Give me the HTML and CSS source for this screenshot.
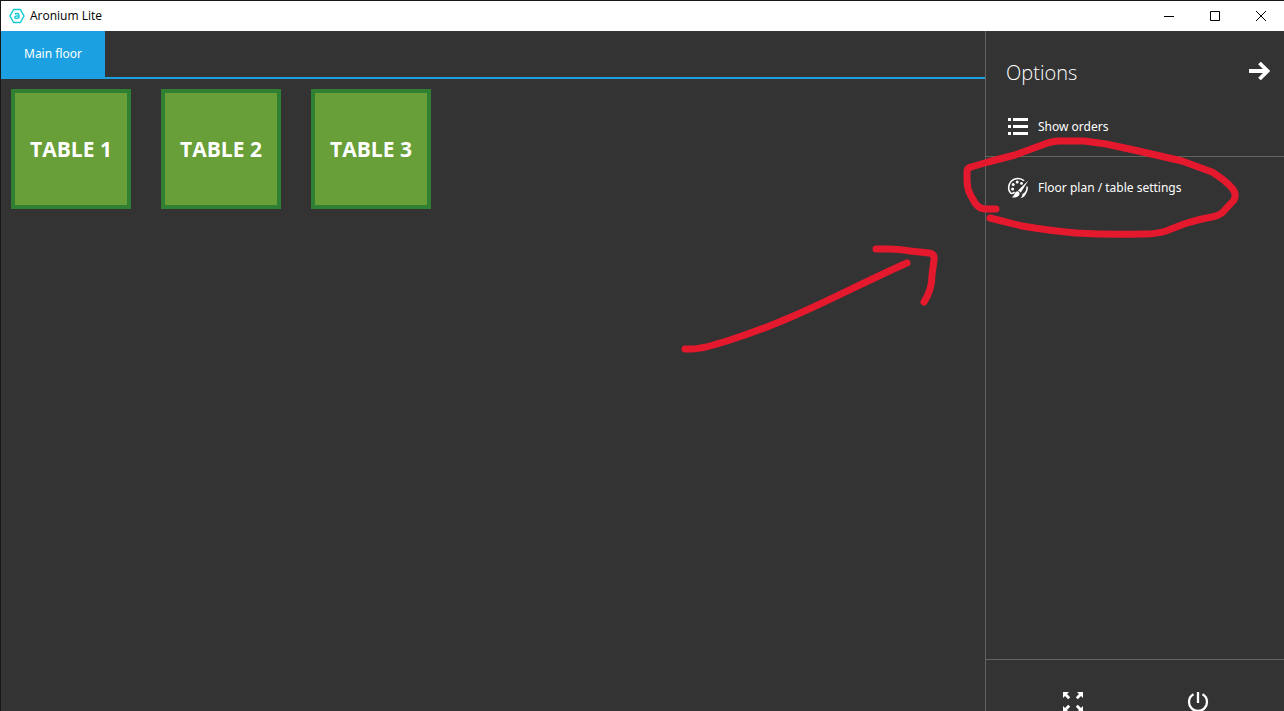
FILE: index.html
```html
<!DOCTYPE html>
<html lang="en">
<head>
<meta charset="utf-8">
<title>Aronium Lite</title>
<link rel="stylesheet" href="styles.css">
</head>
<body>
<div class="window">
  <header class="titlebar">
    <svg class="logo" viewBox="0 0 16 16" aria-hidden="true">
      <path d="M4.6 1.5h6.8L15 8l-3.6 6.5H4.600L1 8z" fill="none" stroke="#14cbd4" stroke-width="1.500" stroke-linejoin="round"/>
      <path d="M5.900 6.200c.8-1 4-1.200 4 .7v3.600M9.900 7.800c-2.400 0-4.100.2-4.100 1.500 0 1.700 3.300 1.500 4.100-.3" fill="none" stroke="#14cbd4" stroke-width="1.400"/>
    </svg>
    <h1 class="app-name">Aronium Lite</h1>
    <div class="window-controls">
      <button class="window-button" type="button" aria-label="Minimize"><svg viewBox="0 0 12 12"><path d="M1 6.500h10"/></svg></button>
      <button class="window-button" type="button" aria-label="Maximize"><svg viewBox="0 0 12 12"><path d="M1.500 1.500h9v9h-9z"/></svg></button>
      <button class="window-button" type="button" aria-label="Close"><svg viewBox="0 0 12 12"><path d="M1 1l10 10M11 1L1 11"/></svg></button>
    </div>
  </header>
  <div class="workspace">
    <main class="floor">
      <nav class="tabs"><button class="tab" type="button">Main floor</button></nav>
      <div class="tables">
        <button class="table-tile" type="button">TABLE 1</button>
        <button class="table-tile" type="button">TABLE 2</button>
        <button class="table-tile" type="button">TABLE 3</button>
      </div>
    </main>
    <aside class="options">
      <div class="options-header">
        <h2 class="options-title">Options</h2>
        <button class="icon-button" type="button" aria-label="Hide options">
          <svg class="icon" viewBox="0 0 22 22"><path d="M1 11h18M11.500 3l8 8-8 8" fill="none" stroke="#fff" stroke-width="3.800"/></svg>
        </button>
      </div>
      <button class="option option-orders" type="button">
        <svg class="icon" viewBox="0 0 22 22"><path d="M1 3h3v3H1zM6 3h15v3H6zM1 10h3v3H1zM6 10h15v3H6zM1 17h3v3H1zM6 17h15v3H6z" fill="#fff"/></svg>
        Show orders
      </button>
      <button class="option option-floor" type="button">
        <svg class="icon" viewBox="0 0 22 22">
          <path d="M17.200 3.800C13.400.5 7.600.7 4.200 4.300.8 8 .9 13.500 3.700 16.200c1.500 1 2.600-.2 3.800-1.200M20 9.500c.5 3.300-.8 6.200-3.200 8" fill="none" stroke="#fff" stroke-width="1.500"/>
          <g fill="#fff"><circle cx="5.600" cy="12" r="1.500"/><circle cx="6.200" cy="7.600" r="1.500"/><circle cx="10.200" cy="5" r="1.500"/><circle cx="14.500" cy="6.400" r="1.400"/>
          <path d="M21.300 3.600l-7.500 12-2.800-2zM10.200 14.300c1.900.2 2.900 1.600 2.100 3.400-1.100 2.500-4.600 3.300-7.600 2.600 2.800-1.100 2.500-5.200 5.500-6zM15.500 16.800c1.800-.2 2.700-1.400 4-1.800-.7 3.700-2.900 5.800-6 6.200 1.300-1 2-2.400 2-4.400z"/></g>
        </svg>
        Floor plan / table settings
      </button>
      <footer class="options-footer">
        <button class="footer-button" type="button" aria-label="Full screen">
          <svg class="icon" viewBox="0 0 22 22"><path d="M1 1h6L5 3l3.200 3.200-2 2L3 5 1 7zM21 1v6l-2-2-3.200 3.200-2-2L17 3l-2-2zM1 21v-6l2 2 3.200-3.200 2 2L5 19l2 2zM21 21h-6l2-2-3.200-3.200 2-2L19 17l2-2z" fill="#fff"/></svg>
        </button>
        <button class="footer-button" type="button" aria-label="Power">
          <svg class="icon" viewBox="0 0 22 22"><path d="M11 1v11M6.500 3.300C3.500 5 2 8 2 11a9 9 0 0 0 18 0c0-3-1.500-6-4.500-7.700" fill="none" stroke="#fff" stroke-width="2.300"/></svg>
        </button>
      </footer>
    </aside>
  </div>
  <svg class="annotation" viewBox="664 130 620 230" aria-hidden="true">
    <path d="M996 209H986Q979 209 975 203L970 194Q967 188 967 180V172Q967 168 971 167L988 162L1015 155L1042 145Q1052 141 1060 141H1084L1106 144L1134 150L1182 161L1212 172Q1225 180 1232 188Q1237 194 1234 200L1222 213Q1218 216 1212 217Q1196 220 1184 224L1166 231Q1156 234 1144 234Q1108 235 1076 233Q1052 231 1022 226L1002 221L990 218"/>
    <path d="M685 349H692Q702 349 730 340C797 319 850 288 907 263M876 249H889Q898 249 910 251L929 253Q935 254 934 260L932 275Q932 290 924 302"/>
  </svg>
</div>
</body>
</html>
```
FILE: styles.css
```css
* { box-sizing: border-box; }
body {
  margin: 0;
  font-family: "Noto Sans", "Open Sans", sans-serif;
  font-size: 12px;
  color: #fff;
}
button {
  margin: 0;
  padding: 0;
  border: 0;
  background: none;
  color: inherit;
  font: inherit;
}
h1, h2 { margin: 0; font-weight: 400; }
.window {
  position: relative;
  display: flex;
  flex-direction: column;
  height: 100vh;
  overflow: hidden;
  border-top: 1px solid #181818;
  border-left: 1px solid #181818;
  background: #333;
}
.titlebar {
  display: flex;
  align-items: center;
  flex: none;
  height: 30px;
  padding-left: 8px;
  background: #fff;
  color: #000;
}
.logo { width: 16px; height: 16px; margin-right: 5px; }
.app-name {
  font-family: "Open Sans", "Noto Sans", sans-serif;
  font-size: 12px;
  line-height: 16px;
}
.window-controls { display: flex; height: 100%; margin-left: auto; }
.window-button {
  display: flex;
  align-items: center;
  justify-content: center;
  width: 46px;
}
.window-button svg {
  width: 12px;
  height: 12px;
  fill: none;
  stroke: #000;
  stroke-width: 1;
}
.workspace { display: flex; flex: 1; min-height: 0; }
.floor { flex: 1; min-width: 0; }
.tabs { display: flex; height: 48px; border-bottom: 2px solid #1ba1e2; }
.tab { padding: 0 23px 2px; background: #1ba1e2; }
.tables { display: flex; flex-wrap: wrap; gap: 30px; padding: 10px; }
.table-tile {
  width: 120px;
  height: 120px;
  border: 4px solid #308033;
  background: #689f38;
  font-family: "Open Sans", "Noto Sans", sans-serif;
  font-size: 21px;
  font-weight: 700;
}
.options {
  display: flex;
  flex-direction: column;
  flex: none;
  width: 299px;
  border-left: 1px solid #636363;
}
.options-header {
  display: flex;
  align-items: flex-start;
  justify-content: space-between;
  height: 65px;
  padding: 28px 14px 0 20px;
}
.options-title {
  font-family: "Open Sans", "Noto Sans", sans-serif;
  font-size: 20px;
  font-weight: 300;
  line-height: 28px;
}
.icon-button { padding-top: 1px; }
.icon { display: block; flex: none; width: 22px; height: 22px; }
.option {
  display: flex;
  align-items: center;
  gap: 9px;
  height: 61px;
  padding-left: 21px;
  text-align: left;
}
.option-orders { border-bottom: 1px solid #5f635b; }
.option-floor { flex: none; }
.options-footer {
  display: flex;
  justify-content: center;
  flex: none;
  height: 52px;
  margin-top: auto;
  padding-top: 31px;
  border-top: 1px solid #636363;
  overflow: hidden;
}
.footer-button {
  display: flex;
  justify-content: center;
  align-items: flex-start;
  width: 125px;
}
.annotation {
  position: absolute;
  top: 129px;
  right: 0;
  width: 620px;
  height: 230px;
  pointer-events: none;
  fill: none;
  stroke: #e5192d;
  stroke-width: 7;
  stroke-linecap: round;
  stroke-linejoin: round;
}
```
